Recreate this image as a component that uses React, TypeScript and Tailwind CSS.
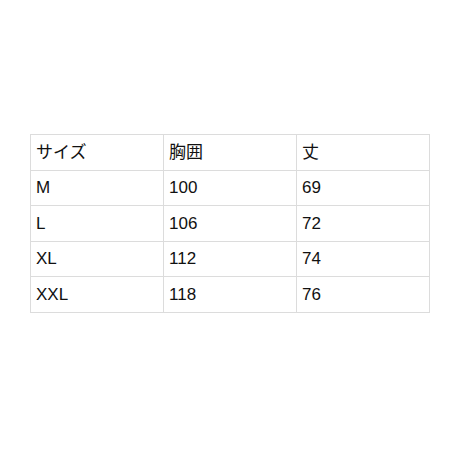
const rows = [
  ['サイズ', '胸囲', '丈'],
  ['M', '100', '69'],
  ['L', '106', '72'],
  ['XL', '112', '74'],
  ['XXL', '118', '76'],
]

export default function App() {
  return (
    <div className="w-[460px] h-[460px] bg-white pt-[134px] px-[30px]" style={{ fontFamily: '"Liberation Sans", "Noto Sans CJK JP", sans-serif' }}>
      <div className="grid grid-cols-3 w-[400px] border-l border-t border-[#dcdcdc]">
        {rows.flatMap((row, r) =>
          row.map((cell, c) => (
            <div
              key={`${r}-${c}`}
              className="h-[35.5px] flex items-center pl-[5px] border-r border-b border-[#dcdcdc] text-[17px] text-[#111111]"
            >
              {cell}
            </div>
          ))
        )}
      </div>
    </div>
  )
}
